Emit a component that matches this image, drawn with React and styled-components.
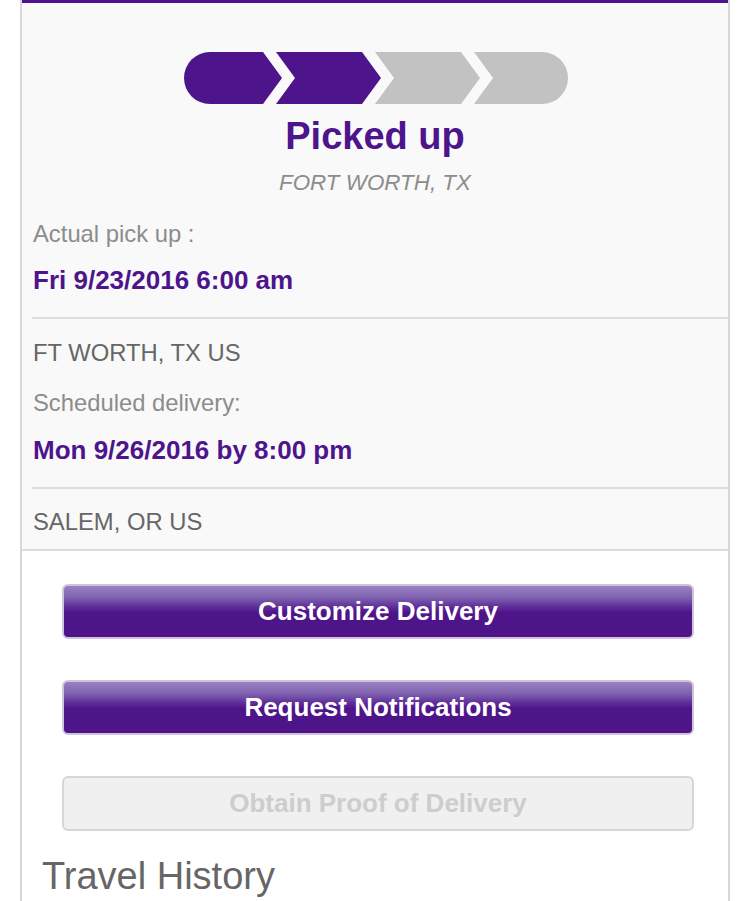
import React from 'react'
import styled, { createGlobalStyle } from 'styled-components'

const GlobalStyle = createGlobalStyle`
  body {
    margin: 0;
    background: #ffffff;
    font-family: "Liberation Sans", Arial, sans-serif;
  }
`

const purple = '#4d148c'

const Page = styled.div`
  padding: 0 20px;
`
const Card = styled.div`
  border-left: 2px solid #d9d6d9;
  border-right: 2px solid #d9d6d9;
  background: #ffffff;
  min-height: 901px;
  box-sizing: border-box;
`
const Summary = styled.section`
  background: #f9f9f9;
  border-top: 3px solid ${purple};
  border-bottom: 2px solid #dcdcdc;
  padding: 49px 0 12px;
`
const Progress = styled.svg`
  display: block;
  margin: 0 auto;
  width: 384px;
  height: 52px;
  transform: translateX(1px);
`
const Status = styled.h1`
  margin: 10px 0 0;
  font-size: 38px;
  line-height: 44px;
  font-weight: bold;
  color: ${purple};
  text-align: center;
`
const StatusCity = styled.div`
  margin-top: 11px;
  font-size: 22.4px;
  line-height: 28px;
  font-style: italic;
  color: #8c8c8c;
  text-align: center;
`
const Details = styled.div`
  padding-left: 11px;
  margin-top: 22px;
`
const Label = styled.div`
  font-size: 23.8px;
  line-height: 30px;
  color: #8c8c8c;
  margin-top: ${({ gap }) => gap || 0}px;
`
const City = styled.div`
  font-size: 23.8px;
  line-height: 30px;
  color: #666666;
  margin-top: ${({ gap }) => gap || 0}px;
`
const Date = styled.div`
  font-size: 26px;
  line-height: 30px;
  font-weight: bold;
  color: ${purple};
  margin-top: ${({ gap }) => gap || 0}px;
`
const Divider = styled.hr`
  margin: 22px 0 0 -1px;
  border: none;
  height: 2px;
  background: #dcdcdc;
`
const Actions = styled.div`
  display: flex;
  flex-direction: column;
  gap: 41px;
  padding: 33px 34px 0 40px;
`
const Button = styled.button`
  height: 55px;
  border-radius: 6px;
  font-family: "Liberation Sans", Arial, sans-serif;
  font-size: 26px;
  font-weight: bold;
  border: 2px solid ${({ disabled }) => (disabled ? '#d6d6d6' : '#cfc3dd')};
  color: ${({ disabled }) => (disabled ? '#cdcdcd' : '#ffffff')};
  background: ${({ disabled }) =>
    disabled
      ? '#f0f0f0'
      : 'linear-gradient(to bottom, #9a80c2 0%, #8064b0 22%, #5e2a99 42%, #4e158a 52%, #4e158a 100%)'};
  cursor: ${({ disabled }) => (disabled ? 'default' : 'pointer')};
`
const HistoryTitle = styled.h2`
  margin: 23px 0 0 20px;
  font-size: 38px;
  line-height: 44px;
  font-weight: normal;
  color: #666666;
`

const ProgressBar = ({ step }) => {
  const fill = (i) => (i < step ? purple : '#c2c2c2')
  return (
    <Progress viewBox="0 0 384 52">
      <path d="M26,0 H79 L98,26 L79,52 H26 A26,26 0 0 1 26,0 Z" fill={fill(0)} />
      <path d="M92,0 H178 L197,26 L178,52 H92 L111,26 Z" fill={fill(1)} />
      <path d="M191,0 H277 L296,26 L277,52 H191 L210,26 Z" fill={fill(2)} />
      <path d="M290,0 H358 A26,26 0 0 1 358,52 H290 L309,26 Z" fill={fill(3)} />
    </Progress>
  )
}

const App = () => {
  return (
    <Page>
      <GlobalStyle />
      <Card>
        <Summary>
          <ProgressBar step={2} />
          <Status>Picked up</Status>
          <StatusCity>FORT WORTH, TX</StatusCity>
          <Details>
            <Label>Actual pick up :</Label>
            <Date gap={16}>Fri 9/23/2016 6:00 am</Date>
            <Divider />
            <City gap={19}>FT WORTH, TX US</City>
            <Label gap={20}>Scheduled delivery:</Label>
            <Date gap={17}>Mon 9/26/2016 by 8:00 pm</Date>
            <Divider />
            <City gap={18}>SALEM, OR US</City>
          </Details>
        </Summary>
        <Actions>
          <Button>Customize Delivery</Button>
          <Button>Request Notifications</Button>
          <Button disabled>Obtain Proof of Delivery</Button>
        </Actions>
        <HistoryTitle>Travel History</HistoryTitle>
      </Card>
    </Page>
  )
}

export default App
